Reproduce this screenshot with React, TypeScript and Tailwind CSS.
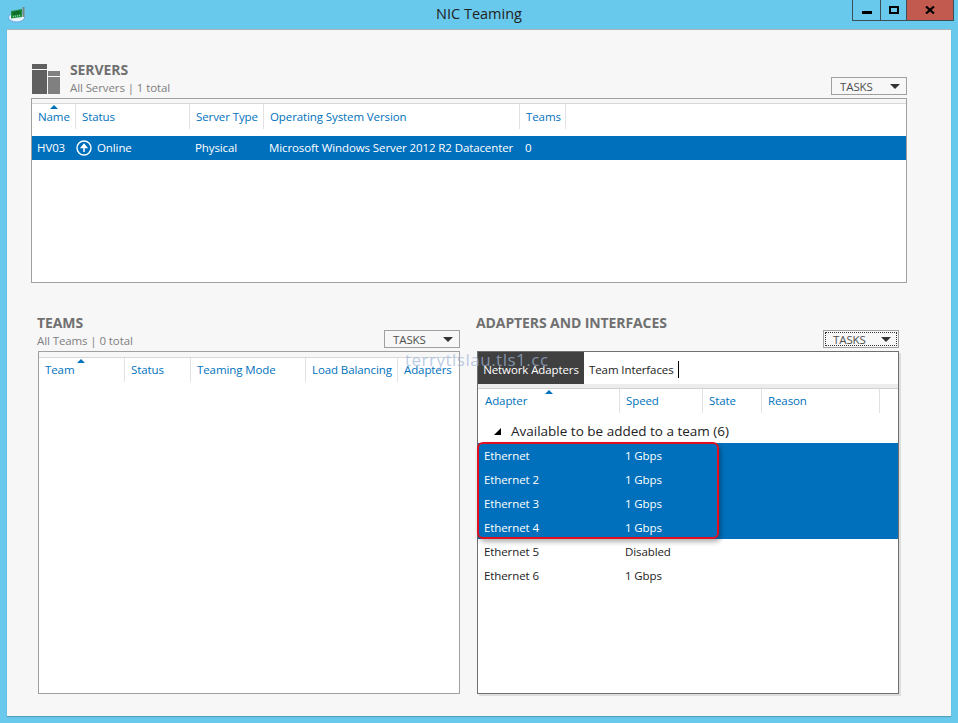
type Col = { label: string; width: string; pad: string; sorted?: boolean; sortPos?: string };

function TasksButton({ focused }: { focused?: boolean }) {
  return (
    <div className="flex h-[18px] w-[76px] items-center border border-[#a0a0a0] bg-[#f7f7f7] p-px">
      <div className={`flex h-full w-full items-center justify-between pl-[7px] pr-[5px] pt-px text-[11.5px] text-[#505050] ${focused ? "border border-dotted border-[#333]" : ""}`}>
        <span>TASKS</span>
        <span className="h-0 w-0 border-x-[5px] border-t-[5px] border-x-transparent border-t-[#333]" />
      </div>
    </div>
  );
}

function HeaderCell({ label, width, pad, sorted, sortPos }: Col) {
  return (
    <div className={`relative flex h-full shrink-0 items-center border-r border-[#e2e2e2] text-[11.5px] text-[#0072bc] ${width} ${pad}`}>
      {sorted ? (
        <span className={`absolute top-px h-0 w-0 border-x-[4px] border-b-[4px] border-x-transparent border-b-[#0072bc] ${sortPos}`} />
      ) : null}
      <span className="whitespace-nowrap">{label}</span>
    </div>
  );
}

const serverCols: Col[] = [
  { label: "Name", width: "w-[44px]", pad: "pl-[6px]", sorted: true, sortPos: "left-[18px]" },
  { label: "Status", width: "w-[114px]", pad: "pl-[6px]" },
  { label: "Server Type", width: "w-[74px]", pad: "pl-[6px]" },
  { label: "Operating System Version", width: "w-[256px]", pad: "pl-[6px]" },
  { label: "Teams", width: "w-[46px]", pad: "pl-[6px]" },
];

const teamCols: Col[] = [
  { label: "Team", width: "w-[86px]", pad: "pl-[6px]", sorted: true, sortPos: "left-[38px]" },
  { label: "Status", width: "w-[66px]", pad: "pl-[6px]" },
  { label: "Teaming Mode", width: "w-[115px]", pad: "pl-[6px]" },
  { label: "Load Balancing", width: "w-[92px]", pad: "pl-[6px]" },
  { label: "Adapters", width: "w-[60px] border-r-0", pad: "pl-[6px]" },
];

const adapterCols: Col[] = [
  { label: "Adapter", width: "w-[142px]", pad: "pl-[7px]", sorted: true, sortPos: "left-[67px]" },
  { label: "Speed", width: "w-[83px]", pad: "pl-[6px]" },
  { label: "State", width: "w-[59px]", pad: "pl-[6px]" },
  { label: "Reason", width: "w-[118px]", pad: "pl-[6px]" },
];

const adapters = [
  { name: "Ethernet", speed: "1 Gbps", selected: true },
  { name: "Ethernet 2", speed: "1 Gbps", selected: true },
  { name: "Ethernet 3", speed: "1 Gbps", selected: true },
  { name: "Ethernet 4", speed: "1 Gbps", selected: true },
  { name: "Ethernet 5", speed: "Disabled", selected: false },
  { name: "Ethernet 6", speed: "1 Gbps", selected: false },
];

function AppIcon() {
  return (
    <svg width="18" height="17" viewBox="0 0 18 17" className="block">
      <ellipse cx="8.5" cy="11.5" rx="8" ry="4.5" fill="#e6f2fc" stroke="#6aa4e0" />
      <path d="M3 5 L14 3 V11 L3 12.5 Z" fill="#1f8f40" />
      <path d="M4.5 6 L12.5 4.6 V8 L4.5 9.2 Z" fill="#0f6b2a" />
      <path d="M5 10.5 L13 9.5" stroke="#9fdca8" strokeWidth="1.2" strokeDasharray="1 1" />
      <path d="M14.5 1 H16.5 V11 H14.5 Z" fill="#7a8a80" />
    </svg>
  );
}

export default function App() {
  return (
    <div className="relative flex h-[723px] w-[958px] flex-col overflow-hidden bg-[#69c9ec] font-['Open_Sans',sans-serif] text-[11.5px] tracking-[-0.1px]">
      {/* title bar */}
      <div className="relative flex h-[29px] shrink-0 items-center justify-center pb-[2px] text-[14.5px] tracking-normal text-[#222]">
        <div className="absolute left-[8px] top-[6px]">
          <AppIcon />
        </div>
        <span>NIC Teaming</span>
        <div className="absolute left-[852px] top-0 flex h-[21px] border-x border-b border-[#3e4e57]">
          <div className="flex w-[28px] items-end justify-center border-r border-[#3e4e57] pb-[6px]">
            <span className="h-[3px] w-[10px] bg-black" />
          </div>
          <div className="flex w-[26px] items-center justify-center border-r border-[#3e4e57]">
            <span className="h-[8px] w-[10px] border-2 border-black" />
          </div>
          <div className="flex w-[46px] items-center justify-center bg-[#c25a4f]">
            <svg width="10" height="8" viewBox="0 0 10 8">
              <path d="M1 0.5 L9 7.5 M9 0.5 L1 7.5" stroke="#000" strokeWidth="2.2" />
            </svg>
          </div>
        </div>
      </div>

      {/* client area */}
      <div className="mx-[7px] mb-[7px] flex flex-1 flex-col border-t border-[#a9b4ba] bg-[#f7f7f7] pl-[24px] pr-[44px] pt-[34px] shadow-[0_1px_1px_rgba(0,0,0,0.2)]">
        {/* servers */}
        <div className="flex h-[34px] items-start">
          <svg width="28" height="30" viewBox="0 0 28 30" className="ml-px block shrink-0">
            <rect x="0" y="0" width="15" height="5" fill="#606060" />
            <rect x="0" y="6" width="15" height="24" fill="#606060" />
            <rect x="16" y="7" width="12" height="5" fill="#808080" />
            <rect x="16" y="13" width="12" height="17" fill="#808080" />
          </svg>
          <div className="ml-[10px] flex-1">
            <div className="-mt-px text-[14px] font-bold leading-[14px] text-[#707070]">SERVERS</div>
            <div className="mt-[3px] leading-[16px] text-[#808080]">All Servers | 1 total</div>
          </div>
          <div className="mt-[13px]">
            <TasksButton />
          </div>
        </div>

        <div className="h-[185px] border border-[#a0a0a0] bg-white">
          <div className="h-[5px] border-b border-[#d8d8d8] bg-[#f7f7f7]" />
          <div className="flex h-[32px] items-stretch pb-[7px]">
            {serverCols.map((col) => (
              <HeaderCell key={col.label} {...col} />
            ))}
          </div>
          <div className="flex h-[24px] items-center bg-[#0070bd] text-white">
            <span className="w-[44px] shrink-0 pl-[5px]">HV03</span>
            <div className="flex w-[114px] shrink-0 items-center gap-[5px]">
              <svg width="16" height="16" viewBox="0 0 16 16" className="block">
                <circle cx="8" cy="8" r="7" fill="none" stroke="#fff" strokeWidth="1.4" />
                <path d="M8 12 V6 M5.5 7.5 L8 4.5 L10.5 7.5 Z" stroke="#fff" strokeWidth="1.5" fill="#fff" />
              </svg>
              <span>Online</span>
            </div>
            <span className="w-[74px] shrink-0 pl-[5px]">Physical</span>
            <span className="w-[256px] shrink-0 whitespace-nowrap pl-[5px]">Microsoft Windows Server 2012 R2 Datacenter</span>
            <span className="pl-[5px]">0</span>
          </div>
        </div>

        {/* lower panes */}
        <div className="ml-[7px] mr-[8px] mt-[32px] grid grid-cols-[422px_422px] gap-x-[17px]">
          <div>
            <div className="flex h-[36px] items-start">
              <div className="-ml-px flex-1">
                <div className="text-[14px] font-bold leading-[16px] text-[#707070]">TEAMS</div>
                <div className="mt-[2px] leading-[16px] text-[#808080]">All Teams | 0 total</div>
              </div>
              <div className="mt-[15px]">
                <TasksButton />
              </div>
            </div>
            <div className="h-[343px] border border-[#a0a0a0] bg-white">
              <div className="h-[6px] border-b border-[#d8d8d8] bg-[#f7f7f7]" />
              <div className="flex h-[26px] items-stretch pb-[2px]">
                {teamCols.map((col) => (
                  <HeaderCell key={col.label} {...col} />
                ))}
              </div>
            </div>
          </div>

          <div>
            <div className="flex h-[36px] items-start">
              <div className="-ml-px flex-1 text-[14px] font-bold leading-[16px] text-[#707070]">ADAPTERS AND INTERFACES</div>
              <div className="mt-[15px]">
                <TasksButton focused />
              </div>
            </div>
            <div className="h-[343px] border border-[#707070] bg-white shadow-[2px_2px_0_#dddddd]">
              <div className="flex h-[32px] items-stretch">
                <div className="flex w-[106px] items-center justify-center bg-[#404040] pt-[4px] text-white">Network Adapters</div>
                <div className="ml-[5px] flex items-center pt-[4px] text-[#222]">Team Interfaces</div>
                <span className="ml-[4px] mt-[9px] h-[17px] w-px bg-black" />
              </div>
              <div className="h-[5px] border-b border-[#d0d0d0] bg-[#ececec]" />
              <div className="flex h-[24px] items-stretch">
                {adapterCols.map((col) => (
                  <HeaderCell key={col.label} {...col} />
                ))}
              </div>
              <div className="flex h-[30px] items-center pl-[16px] pt-[6px] text-[13.5px] tracking-normal text-[#222]">
                <span className="mr-[10px] h-0 w-0 border-b-[7px] border-l-[7px] border-b-black border-l-transparent" />
                <span>Available to be added to a team (6)</span>
              </div>
              {adapters.map((row) => (
                <div
                  key={row.name}
                  className={`flex h-[24px] items-center pt-px ${row.selected ? "bg-[#0070bd] text-white" : "text-[#222]"}`}
                >
                  <span className="w-[141px] shrink-0 pl-[6px]">{row.name}</span>
                  <span className="pl-[6px]">{row.speed}</span>
                </div>
              ))}
            </div>
          </div>
        </div>
      </div>

      {/* red annotation over the selected rows */}
      <div className="absolute left-[477px] top-[442px] h-[97px] w-[242px] rounded-[6px] border-2 border-[#e01020] shadow-[2px_3px_5px_rgba(0,0,0,0.3)]" />

      {/* watermark */}
      <div className="pointer-events-none absolute left-[405px] top-[347px] text-[17px] tracking-[0.5px] text-[#9fb6d8]/70">terrytlslau.tls1.cc</div>
    </div>
  );
}
